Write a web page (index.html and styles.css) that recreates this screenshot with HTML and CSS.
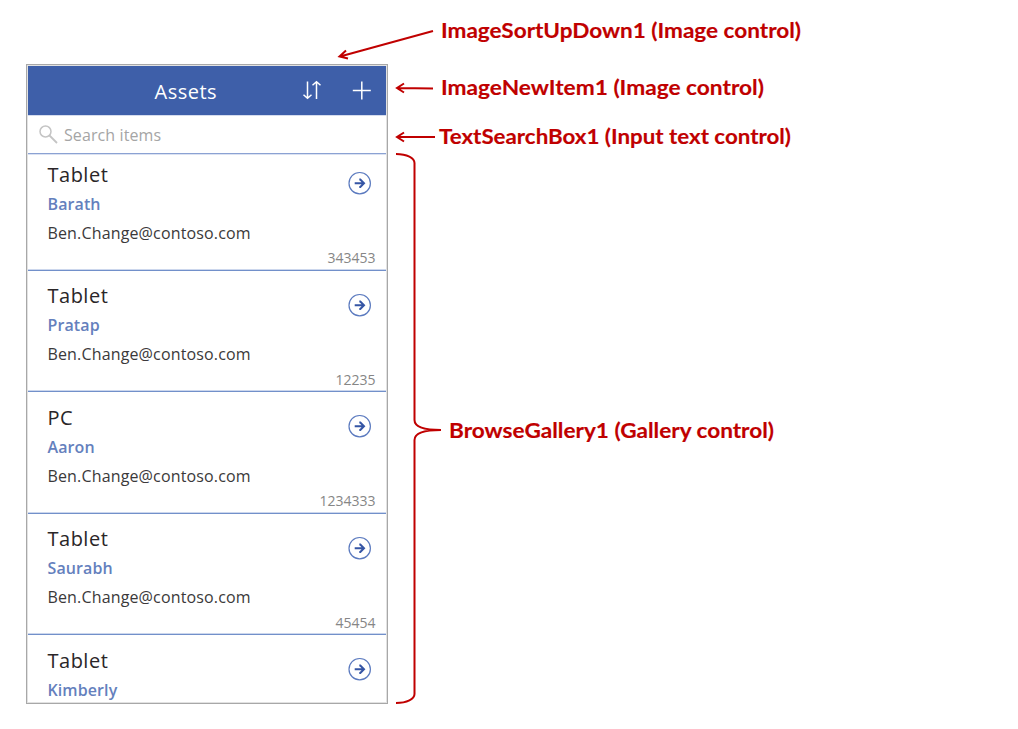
FILE: index.html
```html
<!DOCTYPE html>
<html lang="en">
<head>
<meta charset="utf-8">
<title>Assets</title>
<link rel="stylesheet" href="styles.css">
</head>
<body>
<svg class="symbols" width="0" height="0">
  <symbol id="go" viewBox="0 0 24 24"><circle cx="11.700" cy="12.200" r="10.700" fill="none" stroke="#5b7abf" stroke-width="1.200"/><path d="M6.700 12.200H16M11.300 8.500H12.300L16 12.200L12.300 15.900H11.300" fill="none" stroke="#3555a5" stroke-width="2"/></symbol>
</svg>
<main class="phone">
  <header class="header">
    <h1 class="title">Assets</h1>
    <div class="actions">
      <svg width="20" height="22" viewBox="0 0 20 22" fill="none" stroke="#fff" stroke-width="1.500"><path d="M5.500 1.500V18M1.500 14.800L5.500 18.300L9.500 14.800M14.500 19V2M10.500 5.200L14.500 1.700L18.500 5.200"/></svg>
      <svg width="20" height="20" viewBox="0 0 20 20" stroke="#fff" stroke-width="1.500"><path d="M9.800 0.500V18.500M0.800 9.500H18.800"/></svg>
    </div>
  </header>
  <div class="search">
    <svg width="20" height="20" viewBox="0 0 20 20" fill="none" stroke="#c4c4c4"><circle cx="7.500" cy="7.500" r="5.500" stroke-width="1.500"/><path d="M11.500 11.500L19 19" stroke-width="1.800"/></svg>
    <span class="hint">Search items</span>
  </div>
  <section class="gallery">
    <article class="item"><h2 class="name">Tablet</h2><p class="owner">Barath</p><p class="mail">Ben.Change@contoso.com</p><p class="num">343453</p><svg class="go"><use href="#go"/></svg></article>
    <article class="item"><h2 class="name">Tablet</h2><p class="owner">Pratap</p><p class="mail">Ben.Change@contoso.com</p><p class="num">12235</p><svg class="go"><use href="#go"/></svg></article>
    <article class="item"><h2 class="name">PC</h2><p class="owner">Aaron</p><p class="mail">Ben.Change@contoso.com</p><p class="num">1234333</p><svg class="go"><use href="#go"/></svg></article>
    <article class="item"><h2 class="name">Tablet</h2><p class="owner">Saurabh</p><p class="mail">Ben.Change@contoso.com</p><p class="num">45454</p><svg class="go"><use href="#go"/></svg></article>
    <article class="item"><h2 class="name">Tablet</h2><p class="owner">Kimberly</p><svg class="go"><use href="#go"/></svg></article>
  </section>
</main>
<svg class="notes" width="1018" height="729" viewBox="0 0 1018 729">
  <g class="lines">
    <path d="M433 31L340 56.500M346 50.500L339.500 56.500L348 58.500"/>
    <path d="M433 88.500L397 88M404 83.500L397 88L404 92.500"/>
    <path d="M435 137H397M404 132.500L397 137L404 141.500"/>
    <path d="M396 154C407 154 414.500 158 414.500 163V420C414.500 426 423 430 441 430C423 430 414.500 434 414.500 440V694C414.500 699 407 703 396 703"/>
  </g>
  <g class="labels">
    <text x="441" y="38" textLength="360" lengthAdjust="spacingAndGlyphs">ImageSortUpDown1 (Image control)</text>
    <text x="441" y="95" textLength="323" lengthAdjust="spacingAndGlyphs">ImageNewItem1 (Image control)</text>
    <text x="439" y="144" textLength="352" lengthAdjust="spacingAndGlyphs">TextSearchBox1 (Input text control)</text>
    <text x="449" y="438" textLength="325" lengthAdjust="spacingAndGlyphs">BrowseGallery1 (Gallery control)</text>
  </g>
</svg>
</body>
</html>
```
FILE: styles.css
```css
* { box-sizing: border-box; }
body { margin: 0; width: 1018px; height: 729px; overflow: hidden; background: #fff; padding: 64px 0 0 26px; font-family: "Open Sans", sans-serif; }
.symbols, .notes { position: absolute; left: 0; top: 0; }
.phone { width: 362px; height: 640px; border: 1px solid #a8a8a8; padding: 1px; display: flex; flex-direction: column; box-shadow: inset 0 0 0 1px #e2e2e2; }
.header { height: 49px; flex: none; background: #3e5fa9; display: flex; justify-content: space-between; align-items: center; padding: 0 14px 0 126.500px; color: #fff; }
.title { margin: 0; padding-top: 2px; font-size: 20px; font-weight: 400; line-height: 28px; letter-spacing: .5px; }
.actions { display: flex; align-items: center; gap: 30px; }
.search { height: 39px; flex: none; display: flex; align-items: center; gap: 6px; padding-left: 10px; border-bottom: 1px solid #8ba2d3; box-shadow: inset 0 1px #d5dcee, 0 1px #dbe2f2; position: relative; }
.hint { padding-top: 2px; color: #a5a5a5; font-size: 16px; line-height: 24px; letter-spacing: .1px; }
.gallery { flex: 1; min-height: 0; overflow: hidden; }
.item { height: 121.5px; display: grid; grid-template-columns: 1fr auto; grid-template-rows: 29px 29px 29px 22px; padding: 11px 10.500px 0 19.500px; border-bottom: 1px solid #7290ca; box-shadow: inset 0 -1px #ccd7ed; align-items: center; }
.item:first-child { margin-top: -5px; }
.item:last-child { border-bottom: 0; box-shadow: none; }
.name, .owner, .mail, .num { margin: 0; grid-column: 1; white-space: nowrap; }
.name { font-size: 20px; line-height: 28px; font-weight: 400; letter-spacing: .5px; color: #2a2628; }
.owner { font-size: 16px; line-height: 24px; font-weight: 600; letter-spacing: .1px; color: #6480bd; }
.mail { font-size: 16px; line-height: 24px; color: #3b393a; letter-spacing: .15px; }
.num { grid-column: 1 / 3; justify-self: end; font-size: 14px; line-height: 20px; color: #868686; }
.go { grid-column: 2; grid-row: 1; width: 24px; height: 24px; margin: 17px 4px 0 0; }
.lines { fill: none; stroke: #c00000; stroke-width: 2; }
.labels { fill: #c00000; stroke: #c00000; stroke-width: .15; font-family: Lato, sans-serif; font-size: 21px; font-weight: 700; }
```
